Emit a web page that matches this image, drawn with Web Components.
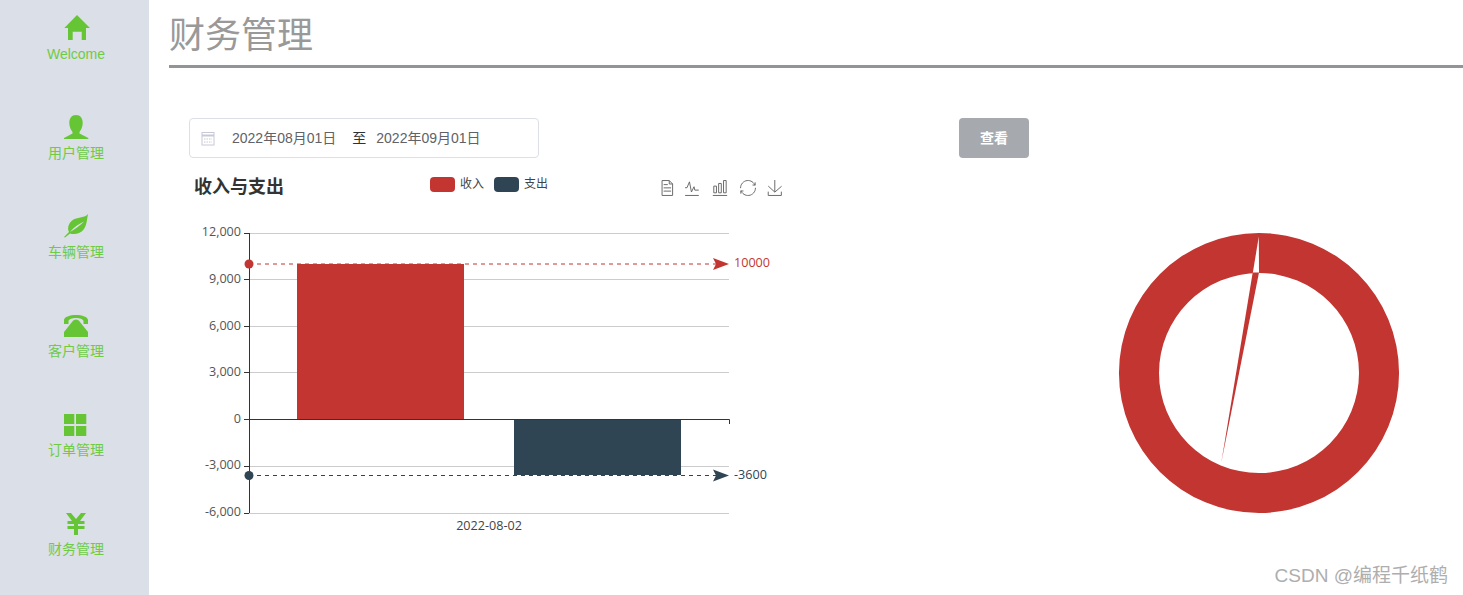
<!DOCTYPE html>
<html lang="zh">
<head>
<meta charset="utf-8">
<title>财务管理</title>
<style>
html,body{margin:0;padding:0;background:#fff;height:100%;overflow:hidden}
body{font-family:"Liberation Sans","Noto Sans CJK SC",sans-serif}
</style>
</head>
<body>
<app-shell>
  <side-nav slot="nav">
    <nav-item icon="home">Welcome</nav-item>
    <nav-item icon="user">用户管理</nav-item>
    <nav-item icon="leaf">车辆管理</nav-item>
    <nav-item icon="phone">客户管理</nav-item>
    <nav-item icon="grid">订单管理</nav-item>
    <nav-item icon="yen">财务管理</nav-item>
  </side-nav>
  <page-title>财务管理</page-title>
  <filter-bar></filter-bar>
  <div slot="charts" style="display:flex;gap:300px;padding:7px 0 0 40px">
    <bar-chart></bar-chart>
    <donut-chart></donut-chart>
  </div>
  <water-mark slot="mark">CSDN @编程千纸鹤</water-mark>
</app-shell>
<script>
const FONT='"Liberation Sans","Noto Sans CJK SC",sans-serif';
const CHARTFONT='"Open Sans","Noto Sans CJK SC",sans-serif';
function tpl(el,html){el.attachShadow({mode:'open'}).innerHTML=html;}

customElements.define('app-shell',class extends HTMLElement{constructor(){super();tpl(this,`<style>
:host{display:flex;height:595px;width:1463px;position:relative;overflow:hidden;font-family:${FONT}}
main{flex:1;min-width:0;display:flex;flex-direction:column}
</style><slot name="nav"></slot><main><slot></slot><slot name="charts"></slot></main><slot name="mark"></slot>`);}});

customElements.define('side-nav',class extends HTMLElement{constructor(){super();tpl(this,`<style>
:host{display:flex;flex-direction:column;width:149px;flex:none;background:#dbdfe8;padding-left:3px;box-sizing:border-box;height:595px}
</style><slot></slot>`);}});

const ICONS={
home:'<path d="M16 2 29 15H25V27H20.7V18.7H11.7V27H7V15H3.3Z"/>',
user:'<path d="M15 3C19.5 3 21.7 6.5 21.7 11 21.7 15 20 18 18.5 20V21.5L27.3 26V27H3V26L11.5 21.5V20C10 18 8.3 15 8.3 11 8.3 6.5 10.5 3 15 3Z"/>',
leaf:'<path d="M27 3C24 7 17 6 12.5 8.5 7.5 11.5 6 17 8 21L3 26 4 26.5 9 22.5C14 24 20 22.5 23 18 26 13.5 26 8 27 3Z"/><path fill="#dbdfe8" d="M9 21C13 16 18 13 23 10.5 19 14.5 14 18 9 21Z"/>',
phone:'<path d="M3 14V10C3 7 9 5 15 5 21 5 27 7 27 10V14H22.5V11C22 9 19 8 15 8 11 8 8 9 7.5 11V14Z"/><path d="M15 9.5C13 9.5 12 10.5 11 12L3 22V27H27V22L19 12C18 10.5 17 9.5 15 9.5Z"/>',
grid:'<rect x="3" y="5" width="10.3" height="10"/><rect x="15" y="5" width="10.3" height="10"/><rect x="3" y="17" width="10.3" height="10"/><rect x="15" y="17" width="10.3" height="10"/>',
yen:'<path d="M5 5H10L15 11 20 5H25L19 13H23.5V16H17V18H23.5V21H17V27H13V21H6.5V18H13V16H6.5V13H11Z"/>'
};
customElements.define('nav-item',class extends HTMLElement{constructor(){super();tpl(this,`<style>
:host{display:flex;flex-direction:column;align-items:center;height:99px;padding-top:13px;box-sizing:border-box;color:#6fcb42;font-size:14px;line-height:16px}
svg{display:block;width:30px;height:30px;fill:#66c535;margin-bottom:3px}
</style><svg viewBox="0 0 30 30">${ICONS[this.getAttribute('icon')]}</svg><span><slot></slot></span>`);}});

customElements.define('page-title',class extends HTMLElement{constructor(){super();tpl(this,`<style>
:host{display:block;margin-left:20px;height:65px;border-bottom:3px solid #939498;box-sizing:content-box;color:#999;font-size:36px;line-height:72px;font-weight:400}
</style><slot></slot>`);}});

customElements.define('filter-bar',class extends HTMLElement{constructor(){super();tpl(this,`<style>
:host{display:flex;align-items:stretch;margin:50px 0 0 40px;height:40px}
</style><date-range></date-range><action-button>查看</action-button>`);}});

customElements.define('date-range',class extends HTMLElement{constructor(){super();tpl(this,`<style>
:host{display:flex;align-items:center;width:350px;height:40px;box-sizing:border-box;border:1px solid #dcdfe6;border-radius:4px;font-size:14px;line-height:16px;color:#606266;padding:0 0 1px 11px}
svg{width:14px;height:15px;flex:none;margin:1px 17px 0 0;display:block}
.to{color:#303133;margin:0 10px 0 16px}
</style><svg viewBox="0 0 14 15" fill="none" stroke="#c8c9d6"><rect x="1" y="1.5" width="12" height="12.5" fill="#fff"/><path d="M1 4.5H13" stroke-width="2"/><path d="M3 8H11M3 11H11" stroke-dasharray="1.5 1"/></svg><span>2022年08月01日</span><span class="to">至</span><span>2022年09月01日</span>`);}});

customElements.define('action-button',class extends HTMLElement{constructor(){super();tpl(this,`<style>
:host{display:flex;align-items:center;justify-content:center;width:70px;height:40px;margin-left:420px;background:#a6a9ad;border-radius:4px;color:#fff;font-size:14px;font-weight:700;padding-bottom:2px;box-sizing:border-box}
</style><slot></slot>`);}});

const RED='#c23531',DARK='#2f4554';
const TOOLS=[
[659,'M17.5,17.3H33 M45.4,29.5h-28 M11.5,2v56H51V14.8L38.4,2H11.5z M38.4,2.2v12.7H51 M45.4,41.7h-28'],
[684,'M4.1,28.9h7.1l9.3-22l7.4,38l9.7-19.7l3,12.8h14.9M4.1,58h51.4'],
[712,'M6.7,22.9h10V48h-10V22.9zM24.9,13h10v35h-10V13zM43.2,2h10v46h-10V2zM3.1,58h53.7'],
[740,'M47,18.9h9.8V8.7 M56.3,20.1 C52.1,9,40.5,0.6,26.8,2.1C12.6,3.7,1.6,16.2,2.1,30.6 M13,41.1H3.1v10.2 M3.7,39.9c4.2,11.1,15.8,19.5,29.5,18 c14.2-1.6,25.2-14.1,24.7-28.5'],
[767,'M4.7,22.9L29.3,45.5L54.7,23.4M4.6,43.6L4.6,58L53.8,58L53.8,43.6M29.2,45.1L29.2,0']
];
const TICKS=[['12,000',233.5,236],['9,000',279.5,283],['6,000',326.5,330],['3,000',372.5,376],['0',419.5,423],['-3,000',466.5,469],['-6,000',513.5,516]];
customElements.define('bar-chart',class extends HTMLElement{constructor(){super();
const grid=TICKS.filter(t=>t[0]!=='0').map(t=>`<path d="M249 ${t[1]}H729" stroke="#ccc"/>`).join('');
const labels=TICKS.map(t=>`<text x="241" y="${t[2]}" text-anchor="end" fill="#555">${t[0]}</text><path d="M244 ${t[1]}H249" stroke="#333"/>`).join('');
const tools=TOOLS.map(t=>`<svg x="${t[0]}" y="180" width="16" height="16" viewBox="0 0 60 60"><path d="${t[1]}" fill="none" stroke="#666" stroke-width="3.6"/></svg>`).join('');
const mark=(y,c,label)=>`<path d="M257 ${y}H716" stroke="${c}" stroke-dasharray="4 4"/><circle cx="249" cy="${y}" r="4.5" fill="${c}"/><path d="M729 ${y}L713 ${y-6}L716 ${y}L713 ${y+6}Z" fill="${c}"/><text x="734" y="${y+3}" fill="${c}">${label}</text>`;
tpl(this,`<style>
:host{display:block;width:620px;height:400px;flex:none}
svg{display:block;overflow:visible}
text{font-family:${CHARTFONT};font-size:12.6px}
.cjk{font-family:${FONT};font-size:12px}
.head{font-family:${FONT};font-size:18px;font-weight:700}
</style><svg width="620" height="400" viewBox="189 165 620 400">
<text class="head" x="194" y="193" fill="#333">收入与支出</text>
<rect x="430" y="177" width="25" height="15" rx="4" fill="${RED}"/><text class="cjk" x="460" y="188" fill="#444">收入</text>
<rect x="494" y="177" width="25" height="15" rx="4" fill="${DARK}"/><text class="cjk" x="524" y="188" fill="#444">支出</text>
${tools}
${grid}
<rect x="297" y="264" width="167" height="155" fill="${RED}"/>
<rect x="514" y="419" width="167" height="56" fill="${DARK}"/>
<path d="M249.5 233V513" stroke="#333"/><path d="M249 419.5H729.5V424" stroke="#333" fill="none"/>
${labels}
<text x="489" y="530" text-anchor="middle" fill="#444">2022-08-02</text>
${mark(264,RED,'10000')}
${mark(475.5,DARK,'-3600')}
</svg>`);}});

customElements.define('donut-chart',class extends HTMLElement{constructor(){super();tpl(this,`<style>
:host{display:block;width:300px;height:300px;margin-top:58px;flex:none}
svg{display:block}
</style><svg width="300" height="300" viewBox="1109 223 300 300">
<path fill-rule="evenodd" fill="${RED}" d="M1259 233A140 140 0 1 1 1259 513A140 140 0 1 1 1259 233ZM1259 273A100 100 0 1 0 1259 473A100 100 0 1 0 1259 273Z"/>
<path fill="#fff" d="M1258.8 236.5L1259 273.5H1252.7Z"/>
<path fill="${RED}" d="M1252.7 272.6H1259L1221.3 462.5Z"/>
</svg>`);}});

customElements.define('water-mark',class extends HTMLElement{constructor(){super();tpl(this,`<style>
:host{position:absolute;right:15px;bottom:8px;font-size:19px;line-height:22px;color:#aeaeae;white-space:nowrap}
</style><slot></slot>`);}});
</script>
</body>
</html>
